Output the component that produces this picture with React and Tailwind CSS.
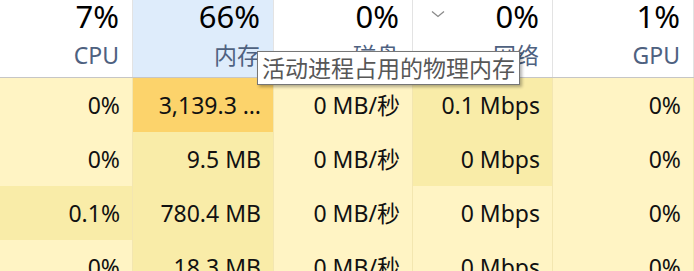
import React from 'react'

const L = 'bg-[#fff4c4]'
const D = 'bg-[#f9eca8]'
const O = 'bg-[#fcd36b]'

const cols = [
  { pct: '7%', label: 'CPU' },
  { pct: '66%', label: '内存', active: true },
  { pct: '0%', label: '磁盘' },
  { pct: '0%', label: '网络', sorted: true },
  { pct: '1%', label: 'GPU' },
]

const rows = [
  [['0%', L], ['3,139.3 …', O], ['0 MB/秒', L], ['0.1 Mbps', D], ['0%', L]],
  [['0%', L], ['9.5 MB', D], ['0 MB/秒', L], ['0 Mbps', D], ['0%', L]],
  [['0.1%', D], ['780.4 MB', D], ['0 MB/秒', L], ['0 Mbps', L], ['0%', L]],
  [['0%', L], ['18.3 MB', D], ['0 MB/秒', L], ['0 Mbps', L], ['0%', L]],
]

const grid = 'grid grid-cols-[133px_141px_139px_140px_1fr]'

export default function App() {
  return (
    <div className="relative w-[694px] h-[271px] overflow-hidden bg-white font-['Noto_Sans','Noto_Sans_CJK_SC',sans-serif]">
      <div className={`${grid} h-[78px] border-b border-[#c6c6c6]`}>
        {cols.map((c, i) => (
          <div
            key={i}
            className={`relative flex flex-col items-end pr-[13px] border-r border-[#e3e3e3] ${c.active ? 'bg-[#deecfb]' : 'bg-white'}`}
          >
            {c.sorted && (
              <svg className="absolute left-[18px] top-[10px]" width="14" height="8" viewBox="0 0 14 8">
                <path d="M1 1.5 L7 6.5 L13 1.5" fill="none" stroke="#8a8a8a" strokeWidth="1.3" />
              </svg>
            )}
            <span className="text-[31px] leading-none mt-[1px] text-black">{c.pct}</span>
            <span className="text-[23px] leading-none mt-[12px] text-[#4e6180]">{c.label}</span>
          </div>
        ))}
      </div>
      {rows.map((r, ri) => (
        <div key={ri} className={`${grid} h-[54px]`}>
          {r.map(([v, bg], ci) => (
            <div
              key={ci}
              className={`flex items-center justify-end pr-[12px] text-[23px] text-[#111] border-r border-[#f3e6b0] whitespace-nowrap ${bg}`}
            >
              {v}
            </div>
          ))}
        </div>
      ))}
      <div className="absolute left-[257px] top-[51px] w-[263px] h-[34px] bg-white border border-[#767676] shadow-[2px_2px_3px_rgba(0,0,0,0.3)] flex items-center pl-[4px] text-[23px] leading-none text-[#575757] whitespace-nowrap">
        活动进程占用的物理内存
      </div>
    </div>
  )
}
